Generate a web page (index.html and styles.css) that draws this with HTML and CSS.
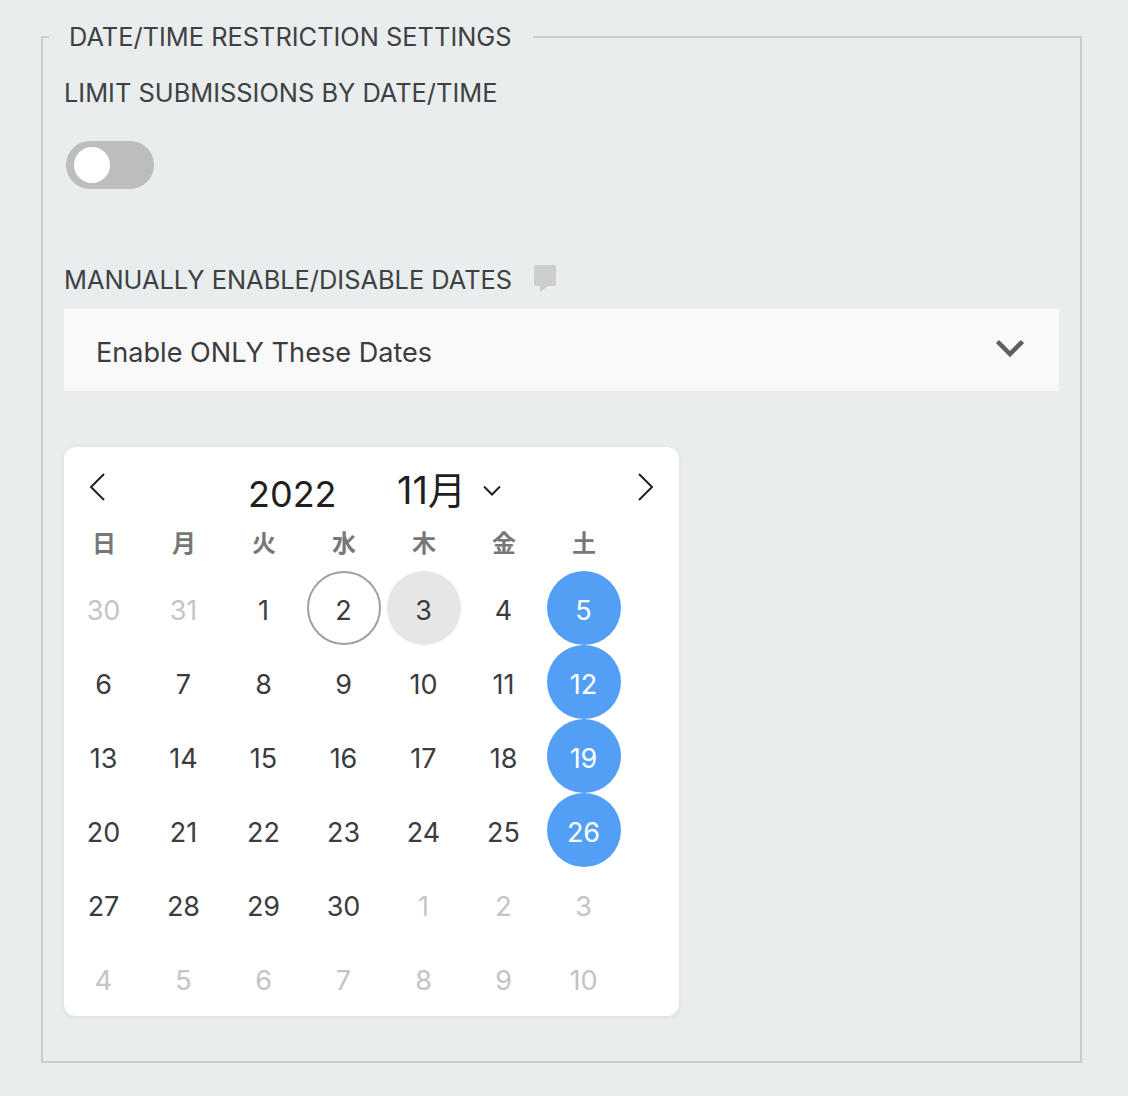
FILE: index.html
```html
<!DOCTYPE html>
<html lang="ja">
<head>
<meta charset="utf-8">
<title>Date/Time Restriction Settings</title>
<link rel="stylesheet" href="styles.css">
</head>
<body>
<fieldset class="panel">
  <legend class="legend">DATE/TIME RESTRICTION SETTINGS</legend>
  <div class="field-label limit-label">LIMIT SUBMISSIONS BY DATE/TIME</div>
  <div class="toggle"><span class="knob"></span></div>
  <div class="label-row">
    <span class="field-label">MANUALLY ENABLE/DISABLE DATES</span>
    <svg class="tip" width="24" height="28" viewBox="0 0 24 28"><path d="M3 1h18a2 2 0 0 1 2 2v17a2 2 0 0 1-2 2h-6l-8 6v-6H3a2 2 0 0 1-2-2V3a2 2 0 0 1 2-2z" fill="#cdcfcf"/></svg>
  </div>
  <div class="select">
    <span>Enable ONLY These Dates</span>
    <svg width="30" height="20" viewBox="0 0 30 20"><path d="M2.500 3.500 15 16 27.500 3.500" fill="none" stroke="#5f5f5f" stroke-width="4.500"/></svg>
  </div>
  <div class="calendar">
    <div class="cal-head">
      <svg class="arrow" width="18" height="28" viewBox="0 0 18 28"><path d="M15 1 2 14l13 13" fill="none" stroke="#222" stroke-width="2"/></svg>
      <span class="year">2022</span>
      <span class="month">11月</span>
      <svg class="month-caret" width="18" height="11" viewBox="0 0 18 11"><path d="M1 1.500 9 9.500l8-8" fill="none" stroke="#222" stroke-width="2"/></svg>
      <svg class="arrow next" width="18" height="28" viewBox="0 0 18 28"><path d="M3 1l13 13L3 27" fill="none" stroke="#222" stroke-width="2"/></svg>
    </div>
    <div class="weekdays">
      <span>日</span><span>月</span><span>火</span><span>水</span><span>木</span><span>金</span><span>土</span>
    </div>
    <div class="days">
      <span class="day muted">30</span><span class="day muted">31</span><span class="day">1</span><span class="day today">2</span><span class="day hover">3</span><span class="day">4</span><span class="day on">5</span>
      <span class="day">6</span><span class="day">7</span><span class="day">8</span><span class="day">9</span><span class="day">10</span><span class="day">11</span><span class="day on">12</span>
      <span class="day">13</span><span class="day">14</span><span class="day">15</span><span class="day">16</span><span class="day">17</span><span class="day">18</span><span class="day on">19</span>
      <span class="day">20</span><span class="day">21</span><span class="day">22</span><span class="day">23</span><span class="day">24</span><span class="day">25</span><span class="day on">26</span>
      <span class="day">27</span><span class="day">28</span><span class="day">29</span><span class="day">30</span><span class="day muted">1</span><span class="day muted">2</span><span class="day muted">3</span>
      <span class="day muted">4</span><span class="day muted">5</span><span class="day muted">6</span><span class="day muted">7</span><span class="day muted">8</span><span class="day muted">9</span><span class="day muted">10</span>
    </div>
  </div>
</fieldset>
</body>
</html>
```

FILE: styles.css
```css
* { box-sizing: border-box; }
html, body { margin: 0; padding: 0; }
body {
  width: 1128px;
  height: 1096px;
  overflow: hidden;
  background: #e9edee;
  font-family: Inter, "Noto Sans CJK JP", sans-serif;
  color: #3f4143;
  padding: 22px 46px 0 41px;
}
.panel {
  margin: 0;
  width: 1041px;
  height: 1041px;
  border: 2px solid #c9cdcd;
  padding: 0 21px;
  min-width: 0;
}
.legend {
  margin-left: -15px;
  padding: 0 21px 0 20px;
  font-size: 25.4px;
  line-height: 30px;
  color: #3f4143;
}
.field-label { font-size: 25.4px; line-height: 30px; }
.limit-label { margin-top: 26px; }
.toggle {
  width: 88px;
  height: 48px;
  margin: 33px 0 0 2px;
  border-radius: 24px;
  background: #bcbdbf;
  padding: 6px 8px;
}
.knob { display: block; width: 36px; height: 36px; border-radius: 50%; background: #fff; }
.label-row { display: flex; align-items: flex-start; margin-top: 75px; height: 45px; }
.label-row .field-label { margin-top: 1px; }
.tip { margin: 0 0 0 21px; width: 24px; height: 28px; }
.select {
  width: 995px;
  height: 82px;
  background: #f9f9f9;
  padding: 4px 34px 0 32px;
  display: flex;
  align-items: center;
  justify-content: space-between;
  font-size: 27.1px;
  color: #3a3c3e;
}
.select svg { margin-top: -9px; }
.calendar {
  width: 615px;
  height: 569px;
  margin-top: 56px;
  background: #fff;
  border-radius: 12px;
  box-shadow: 0 1px 5px rgba(0, 0, 0, 0.08);
}
.cal-head { position: relative; height: 80px; color: #1f1f1f; }
.arrow { position: absolute; left: 25px; top: 26px; }
.arrow.next { left: 572px; }
.year { position: absolute; left: 184px; top: 24px; font-size: 36px; line-height: 46px; }
.month { position: absolute; left: 333px; top: 20px; font-size: 38px; line-height: 46px; }
.month-caret { position: absolute; left: 419px; top: 38px; }
.weekdays, .days { display: grid; grid-template-columns: repeat(7, 80px); }
.weekdays span {
  height: 44px;
  line-height: 34px;
  text-align: center;
  font-size: 24px;
  font-weight: 700;
  color: #777;
}
.day {
  width: 74px;
  height: 74px;
  margin: 0 3px;
  border-radius: 50%;
  display: flex;
  align-items: center;
  justify-content: center;
  padding: 5px 1px 0 0;
  font-size: 27px;
  color: #3a3c3e;
}
.muted { color: #c4c4c4; }
.today { border: 2px solid #99a1ad; }
.hover { background: #e6e6e6; }
.on { background: #549ff6; color: #fff; }
```
